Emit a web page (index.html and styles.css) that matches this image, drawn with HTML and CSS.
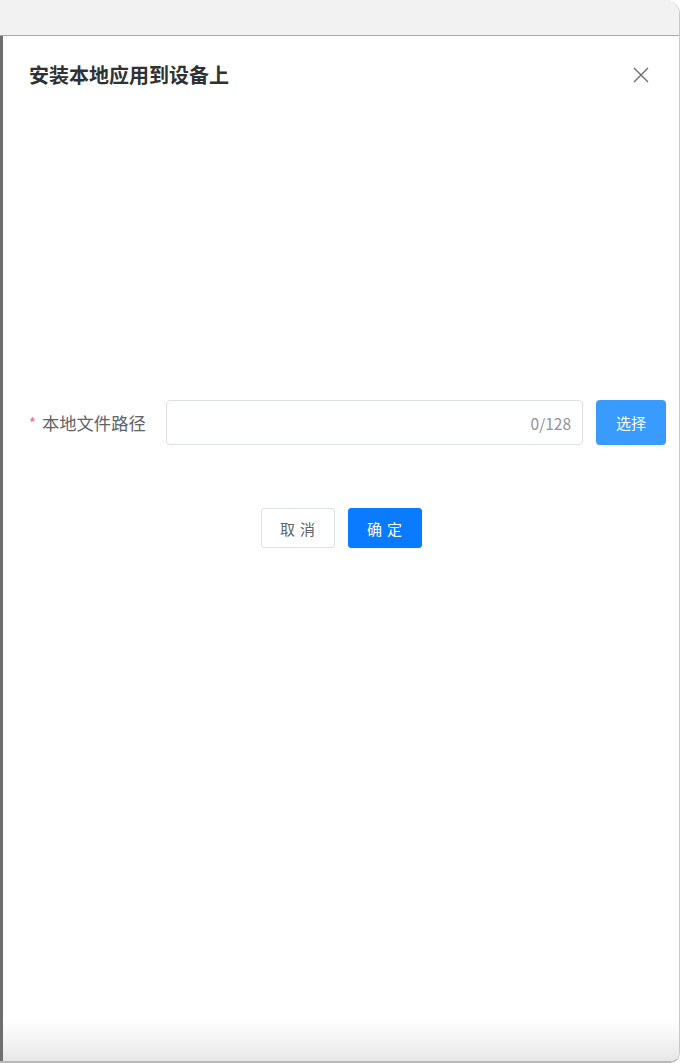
FILE: index.html
```html
<!DOCTYPE html>
<html lang="zh-CN">
<head>
<meta charset="utf-8">
<title>安装本地应用到设备上</title>
<link rel="stylesheet" href="styles.css">
</head>
<body>
<div class="window">
  <div class="topbar"></div>
  <div class="dialog">
    <div class="header">
      <h1 class="title">安装本地应用到设备上</h1>
      <button class="close" aria-label="关闭">
        <svg width="16" height="16" viewBox="0 0 16 16"><path d="M1 1L15 15M15 1L1 15" stroke="#6b6b6b" stroke-width="1.4" fill="none"/></svg>
      </button>
    </div>
    <div class="form-row">
      <label class="label"><span class="star">*</span>本地文件路径</label>
      <div class="input">
        <span class="counter">0/128</span>
      </div>
      <button class="btn-select">选择</button>
    </div>
    <div class="actions">
      <button class="btn btn-cancel">取消</button>
      <button class="btn btn-ok">确定</button>
    </div>
  </div>
</div>
</body>
</html>
```

FILE: styles.css
```css
* { box-sizing: border-box; }
html, body {
  margin: 0;
  padding: 0;
  width: 680px;
  height: 1063px;
  background: #ffffff;
  font-family: "Noto Sans CJK SC", "Noto Sans", sans-serif;
}
.window {
  width: 680px;
  height: 1063px;
  display: flex;
  flex-direction: column;
  border-right: 1px solid #c8c8c8;
  border-bottom: 2px solid #b8b8b8;
  border-radius: 0 14px 10px 0;
  overflow: hidden;
  background: #ffffff;
}
.topbar {
  height: 36px;
  flex: 0 0 36px;
  background: #f3f2f2;
  border-bottom: 1px solid #a9a9a9;
}
.dialog {
  flex: 1;
  border-left: 3px solid #6e6e6e;
  padding: 27px 13px 0 26px;
  display: flex;
  flex-direction: column;
  background: linear-gradient(to bottom, #ffffff calc(100% - 45px), #f4f4f4 calc(100% - 20px), #e6e6e6 100%);
}
.header {
  display: flex;
  align-items: center;
  justify-content: space-between;
  height: 24px;
}
.title {
  margin: 0;
  font-size: 20px;
  line-height: 24px;
  font-weight: 700;
  color: #303133;
}
.close {
  border: none;
  background: none;
  padding: 0;
  margin-right: 17px;
  width: 16px;
  height: 16px;
  display: flex;
}
.form-row {
  margin-top: 313px;
  display: flex;
  align-items: center;
  height: 45px;
}
.label {
  width: 137px;
  font-size: 17.3px;
  color: #606266;
  display: flex;
  align-items: center;
}
.star {
  color: #f56c6c;
  margin-right: 6px;
  font-size: 15px;
}
.input {
  width: 418px;
  height: 45px;
  border: 1px solid #dcdfe6;
  border-radius: 4px;
  display: flex;
  align-items: center;
  justify-content: flex-end;
  padding-right: 11px;
}
.counter {
  font-size: 15.5px;
  color: #909399;
}
.btn-select {
  margin-left: 13px;
  width: 70px;
  height: 45px;
  border: none;
  border-radius: 4px;
  background: #3a9bff;
  color: #ffffff;
  font-family: inherit;
  font-size: 15px;
}
.actions {
  margin-top: 63px;
  display: flex;
  justify-content: center;
  gap: 13px;
  margin-left: -26px;
  margin-right: -13px;
}
.btn {
  width: 74px;
  height: 40px;
  border-radius: 3px;
  font-family: inherit;
  font-size: 15px;
  letter-spacing: 5px;
  padding: 0 0 0 5px;
}
.btn-cancel {
  background: #ffffff;
  border: 1px solid #dcdfe6;
  color: #606266;
}
.btn-ok {
  background: #0a7aff;
  border: 1px solid #0a7aff;
  color: #ffffff;
}
```
